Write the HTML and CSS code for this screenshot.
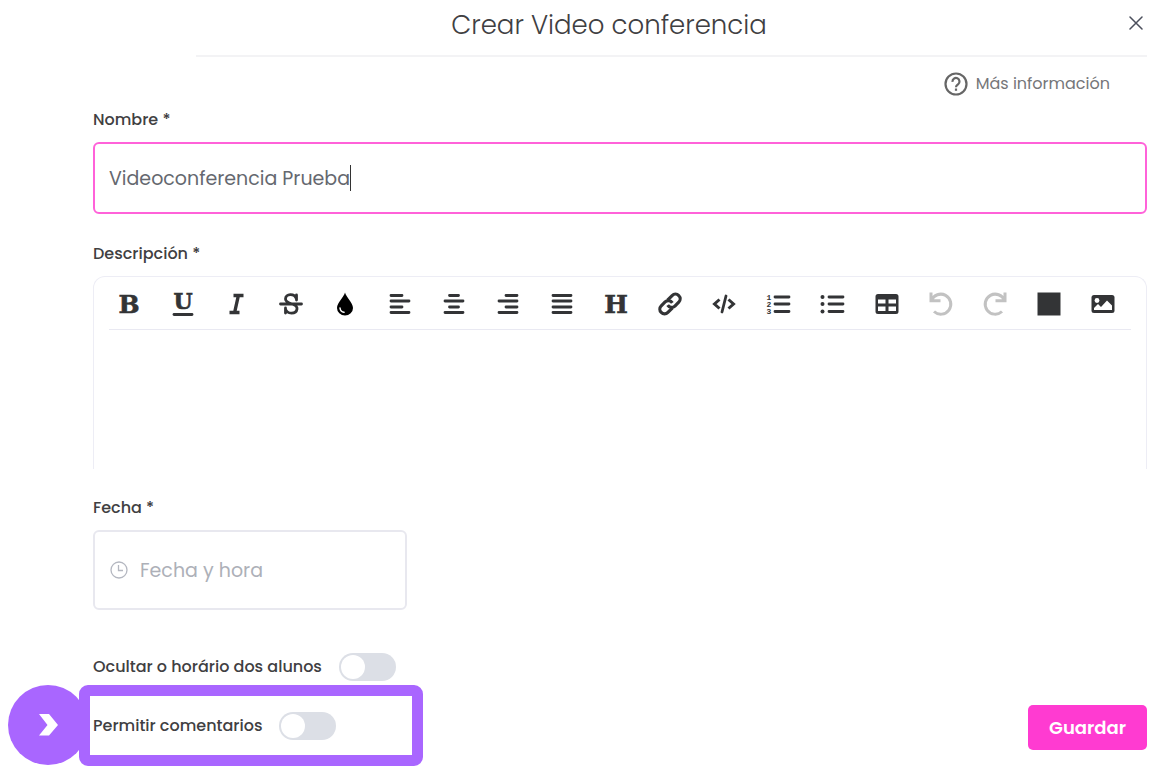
FILE: index.html
```html
<!DOCTYPE html>
<html lang="es">
<head>
<meta charset="utf-8">
<meta name="viewport" content="width=device-width, initial-scale=1">
<title>Crear Video conferencia</title>
<link rel="stylesheet" href="styles.css">
</head>
<body>
<main class="dialog">
  <header class="header">
    <h1 class="title">Crear Video conferencia</h1>
    <button class="close" type="button" aria-label="Cerrar">
      <svg width="14" height="14" viewBox="0 0 14 14"><path d="M1 1l12 12M13 1L1 13" fill="none" stroke="#4b4f5c" stroke-width="1.5" stroke-linecap="round"/></svg>
    </button>
  </header>
  <hr class="rule">
  <form class="form">
    <a class="more" href="#info">
      <svg width="24" height="24" viewBox="0 0 24 24" fill="none" stroke="#666" stroke-width="2.2"><circle cx="12" cy="12" r="10.5"/><path d="M8.500 9.800a3.500 3.500 0 1 1 5.600 2.500c-1.200.9-2.100 1.500-2.100 3"/><path d="M12 16.500v2.300"/></svg>
      <span>Más información</span>
    </a>

    <label class="label" for="nombre">Nombre *</label>
    <div class="name-field">
      <input class="name-input" id="nombre" type="text" value="Videoconferencia Prueba">
      <span class="caret"></span>
    </div>

    <label class="label" for="descripcion">Descripción *</label>
    <div class="editor">
      <div class="toolbar">
        <button class="tool" type="button" aria-label="Negrita"><svg viewBox="0 0 24 24"><text class="glyph" x="12" y="21" font-size="25">B</text></svg></button>
        <button class="tool" type="button" aria-label="Subrayado"><svg viewBox="0 0 24 24"><text class="glyph" x="12" y="17" font-size="22">U</text><path class="line" d="M3 22.500h18"/></svg></button>
        <button class="tool" type="button" aria-label="Cursiva"><svg viewBox="0 0 24 24"><path class="line heavy" d="M8.500 3.500H18.500M4.500 20.500h10M13.500 3l-4 18"/></svg></button>
        <button class="tool" type="button" aria-label="Tachado"><svg viewBox="0 0 24 24"><path class="line" d="M1.500 12h21M17.500 8V3M17.500 7C15.500 1 6.500 1.500 6.500 7c0 3 3.500 4 6.500 5s5.500 2 5 5c-.8 5.500-10 5.500-11.500 0M6.500 16v5"/></svg></button>
        <button class="tool" type="button" aria-label="Color"><svg viewBox="0 0 24 24"><path d="M12 .5C11 5 4 11 4 16a8 7.500 0 0 0 16 0C20 11 13 5 12 .5z" fill="#000"/><path d="M7 16c.3 2.500 1.700 4 4 4.300" fill="none" stroke="#fff" stroke-width="1.500" stroke-linecap="round"/></svg></button>
        <button class="tool" type="button" aria-label="Alinear a la izquierda"><svg viewBox="0 0 24 24"><path class="line" d="M3 3.500h11M3 9h18M3 15h11M3 20.500h18"/></svg></button>
        <button class="tool" type="button" aria-label="Centrar"><svg viewBox="0 0 24 24"><path class="line" d="M7.500 3.500h9M3 9h18M7.500 15h9M3 20.500h18"/></svg></button>
        <button class="tool" type="button" aria-label="Alinear a la derecha"><svg viewBox="0 0 24 24"><path class="line" d="M10 3.500h11M3 9h18M10 15h11M3 20.500h18"/></svg></button>
        <button class="tool" type="button" aria-label="Justificar"><svg viewBox="0 0 24 24"><path class="line" d="M3 3.500h18M3 9h18M3 15h18M3 20.500h18"/></svg></button>
        <button class="tool" type="button" aria-label="Título"><svg viewBox="0 0 24 24"><text class="glyph" x="12" y="21" font-size="25">H</text></svg></button>
        <button class="tool" type="button" aria-label="Enlace"><svg viewBox="0 0 24 24"><g transform="rotate(-45 12 12)" fill="none" stroke="#333436" stroke-width="3.200"><path d="M11 16.500H4.500a4.700 4.700 0 0 1 0-9.400H10a4.700 4.700 0 0 1 4.500 5.700"/><path d="M13 7.500h6.500a4.700 4.700 0 0 1 0 9.400H14a4.700 4.700 0 0 1-4.500-5.700"/></g></svg></button>
        <button class="tool" type="button" aria-label="Código"><svg viewBox="0 0 24 24"><path d="M7.500 7.500L2.500 12l5 4.500M16.500 7.500l5 4.500-5 4.500" fill="none" stroke="#333436" stroke-width="3"/><path class="line" d="M14 4l-4 16"/></svg></button>
        <button class="tool" type="button" aria-label="Lista numerada"><svg viewBox="0 0 24 24"><path class="line" d="M9 5h14M9 12h14M9 19.500h14"/><text class="num" x="3" y="8">1</text><text class="num" x="3" y="15">2</text><text class="num" x="3" y="22">3</text></svg></button>
        <button class="tool" type="button" aria-label="Lista"><svg viewBox="0 0 24 24"><path class="line" d="M9 5h14M9 12h14M9 19.500h14"/><g fill="#333436"><circle cx="2.500" cy="5" r="2"/><circle cx="2.500" cy="12" r="2"/><circle cx="2.500" cy="19.500" r="2"/></g></svg></button>
        <button class="tool" type="button" aria-label="Tabla"><svg viewBox="0 0 24 24"><path fill="#333436" fill-rule="evenodd" d="M3 2h18a2.500 2.500 0 0 1 2.500 2.500v15A2.500 2.500 0 0 1 21 22H3a2.500 2.500 0 0 1-2.500-2.500v-15A2.500 2.500 0 0 1 3 2zM3 7.500v4h7.500v-4zM13.500 7.500v4H21v-4zM3 14.500v4.500h7.500v-4.500zM13.500 14.500v4.500H21v-4.500z"/></svg></button>
        <button class="tool" type="button" aria-label="Deshacer"><svg viewBox="0 0 24 24"><path class="muted" d="M2 .5v8.300h9.500M2.500 8.500A10 10 0 1 1 5 19.500"/></svg></button>
        <button class="tool" type="button" aria-label="Rehacer"><svg viewBox="0 0 24 24"><path class="muted" d="M22 .5v8.300h-9.500M21.500 8.500A10 10 0 1 0 19 19.500"/></svg></button>
        <button class="tool" type="button" aria-label="Color de fondo"><svg viewBox="0 0 24 24"><path fill="#333436" d="M.5 .5h23v23H.5z"/></svg></button>
        <button class="tool" type="button" aria-label="Imagen"><svg viewBox="0 0 24 24"><rect x=".5" y="3" width="23" height="18" rx="2.500" fill="#333436"/><circle cx="6" cy="8.500" r="2.400" fill="#fff"/><path fill="#fff" d="M3 18v-2l4-4 3 3 6-6.500 5 5V18z"/></svg></button>
      </div>
      <textarea class="editor-text" id="descripcion"></textarea>
    </div>

    <label class="label" for="fecha">Fecha *</label>
    <div class="date-field">
      <svg width="18" height="18" viewBox="0 0 18 18" fill="none" stroke="#b4b7c0" stroke-width="1.300"><circle cx="9" cy="9" r="8"/><path d="M8.500 4v5.500H13"/></svg>
      <input class="date-input" id="fecha" type="text" placeholder="Fecha y hora">
    </div>

    <div class="option">
      <label for="ocultar">Ocultar o horário dos alunos</label>
      <input class="switch" id="ocultar" type="checkbox" role="switch">
    </div>
    <div class="footer">
      <div class="option highlight">
        <label for="comentarios">Permitir comentarios</label>
        <input class="switch" id="comentarios" type="checkbox" role="switch">
        <span class="marker"><svg width="20" height="22" viewBox="0 0 20 22"><path d="M0 0h10l9 11-9 10.500H0L8.500 11z" fill="#fff"/></svg></span>
      </div>
      <button class="save" type="submit">Guardar</button>
    </div>
  </form>
</main>
</body>
</html>
```
FILE: styles.css
```css
* { box-sizing: border-box; }

body {
  margin: 0;
  background: #fff;
  color: #3f4042;
  font-family: Poppins, Inter, "Open Sans", sans-serif;
  font-size: 16px;
}

button, input, textarea { font: inherit; color: inherit; }

.dialog { padding: 0 4px 0 93px; }

.header {
  display: grid;
  grid-template-columns: 1fr auto 1fr;
  align-items: center;
  height: 55px;
  margin-left: -22px;
  padding-bottom: 6px;
}

.title {
  grid-column: 2;
  margin: 0;
  font-size: 26px;
  font-weight: 300;
  line-height: 40px;
}

.close {
  justify-self: end;
  display: flex;
  margin: 0 0 4px;
  padding: 4px;
  border: 0;
  background: none;
}

.rule {
  height: 2px;
  margin: 0 0 0 103px;
  border: 0;
  background: #f3f3f5;
}

.form { display: flex; flex-direction: column; }

.more {
  display: flex;
  align-items: center;
  align-self: flex-end;
  gap: 8px;
  margin: 15px 37px 12px 0;
  color: #757679;
  font-size: 16px;
  line-height: 24px;
  text-decoration: none;
}

.label {
  align-self: flex-start;
  margin-bottom: 10px;
  font-weight: 500;
  line-height: 24px;
}

.name-field { position: relative; margin-bottom: 28px; }

.name-input {
  display: block;
  width: 100%;
  height: 72px;
  padding: 0 14px;
  border: 2px solid #ff62d9;
  border-radius: 6px;
  outline: 0;
  color: #65686f;
  font-size: 19px;
}

.caret {
  position: absolute;
  top: 23px;
  left: 257px;
  width: 1px;
  height: 26px;
  background: #333;
}

.editor {
  height: 193px;
  margin-bottom: 27px;
  padding: 0 15px;
  border: 1px solid #ededf5;
  border-bottom: 0;
  border-radius: 12px 12px 0 0;
}

.toolbar {
  display: flex;
  justify-content: space-between;
  padding: 15px 16px 13px 8px;
  border-bottom: 1px solid #e9e9f2;
}

.tool {
  width: 24px;
  height: 24px;
  padding: 0;
  border: 0;
  background: none;
}

.tool svg { display: block; width: 24px; height: 24px; overflow: visible; }

.glyph {
  fill: #333436;
  stroke: #333436;
  stroke-width: 0.6;
  font-family: "DejaVu Serif", serif;
  font-weight: 700;
  text-anchor: middle;
}

.num {
  fill: #333436;
  font-family: "Liberation Mono", monospace;
  font-size: 8px;
  font-weight: 700;
  text-anchor: middle;
}

.line { fill: none; stroke: #333436; stroke-width: 2.8; stroke-linecap: round; }
.heavy { stroke-width: 3.4; stroke-linecap: butt; }
.muted { fill: none; stroke: #c2c2c2; stroke-width: 3; }

.editor-text {
  display: block;
  width: 100%;
  height: 136px;
  padding: 12px 0;
  border: 0;
  outline: 0;
  resize: none;
}

.date-field {
  display: flex;
  align-items: center;
  gap: 12px;
  width: 314px;
  height: 80px;
  margin-bottom: 43px;
  padding: 0 15px;
  border: 2px solid #e8e8ef;
  border-radius: 6px;
}

.date-input {
  flex: 1;
  min-width: 0;
  padding: 0;
  border: 0;
  outline: 0;
  font-size: 19px;
}

.date-input::placeholder { color: #adb0b8; opacity: 1; }

.option {
  display: flex;
  align-items: center;
  gap: 17px;
  font-weight: 500;
  line-height: 24px;
}

.switch {
  appearance: none;
  display: flex;
  align-items: center;
  width: 57px;
  height: 28px;
  margin: 0;
  padding: 0 2px;
  border-radius: 14px;
  background: #dcdfe6;
}

.switch::before {
  content: "";
  width: 24px;
  height: 24px;
  border-radius: 50%;
  background: #fff;
}

.switch:checked::before { margin-left: auto; }

.footer {
  display: flex;
  justify-content: space-between;
  align-items: flex-end;
  margin-top: 4px;
}

.highlight {
  position: relative;
  width: 344px;
  height: 81px;
  margin-left: -14px;
  padding-left: 3px;
  border: 11px solid #a966ff;
  border-radius: 9px;
}

.marker {
  position: absolute;
  z-index: -1;
  top: -11px;
  left: -82px;
  display: flex;
  align-items: center;
  width: 80px;
  height: 80px;
  padding-left: 31px;
  border-radius: 50%;
  background: #a966ff;
}

.save {
  margin-bottom: 16px;
  padding: 0 21px;
  border: 0;
  border-radius: 5px;
  background: #ff3bd1;
  color: #fff;
  font-size: 18px;
  font-weight: 600;
  line-height: 45px;
}
```
